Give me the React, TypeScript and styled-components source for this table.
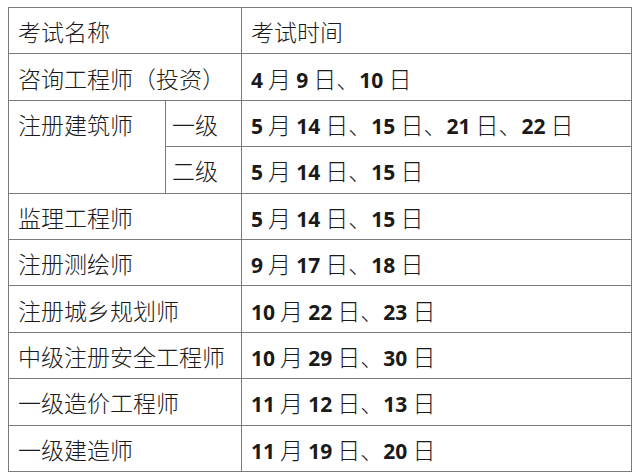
import React from "react";
import styled, { createGlobalStyle } from "styled-components";

const Global = createGlobalStyle`
  html, body { margin: 0; padding: 0; background: #fff; }
  body { font-family: "Noto Sans CJK SC", sans-serif; }
`;

const Page = styled.div`
  width: 640px;
  height: 476px;
  padding: 7px 0 0 8px;
  box-sizing: border-box;
`;

const Grid = styled.div`
  display: grid;
  grid-template-columns: 157px 76px 390px;
  grid-auto-rows: 46.4px;
  border-left: 1.5px solid #7a7a7a;
  border-top: 1.5px solid #7a7a7a;
  width: fit-content;
`;

const Cell = styled.div<{ $span?: number; $rows?: number; $top?: boolean; $pad?: number }>`
  grid-column: span ${(p) => p.$span ?? 1};
  grid-row: span ${(p) => p.$rows ?? 1};
  border-right: 1.5px solid #7a7a7a;
  border-bottom: 1.5px solid #7a7a7a;
  display: flex;
  align-items: ${(p) => (p.$top ? "flex-start" : "center")};
  padding: 1px 0 0 ${(p) => p.$pad ?? 9}px;
  line-height: ${(p) => (p.$top ? "44.4px" : "normal")};
  font-size: 23px;
  font-weight: 300;
  color: #1a1a1a;
  white-space: pre;
  overflow: hidden;
`;

const Num = styled.span`
  font-family: "Open Sans", sans-serif;
  font-weight: 700;
  font-size: 21px;
`;

const split = (s: string) => s.split(/(\d+)/).filter((x) => x !== "");

const DateText = ({ text }: { text: string }) => (
  <span>
    {split(text).map((p, i) =>
      /\d/.test(p) ? <Num key={i}>{p}</Num> : <React.Fragment key={i}>{p}</React.Fragment>
    )}
  </span>
);

const rows: [string, string][] = [
  ["监理工程师", "5 月 14 日、15 日"],
  ["注册测绘师", "9 月 17 日、18 日"],
  ["注册城乡规划师", "10 月 22 日、23 日"],
  ["中级注册安全工程师", "10 月 29 日、30 日"],
  ["一级造价工程师", "11 月 12 日、13 日"],
  ["一级建造师", "11 月 19 日、20 日"],
];

export default function App() {
  return (
    <>
      <Global />
      <Page>
        <Grid>
          <Cell $span={2}>考试名称</Cell>
          <Cell>考试时间</Cell>
          <Cell $span={2}>咨询工程师（投资）</Cell>
          <Cell>
            <DateText text="4 月 9 日、10 日" />
          </Cell>
          <Cell $rows={2} $top>
            注册建筑师
          </Cell>
          <Cell $pad={6}>一级</Cell>
          <Cell>
            <DateText text="5 月 14 日、15 日、21 日、22 日" />
          </Cell>
          <Cell $pad={6}>二级</Cell>
          <Cell>
            <DateText text="5 月 14 日、15 日" />
          </Cell>
          {rows.map(([n, d]) => (
            <React.Fragment key={n}>
              <Cell $span={2}>{n}</Cell>
              <Cell>
                <DateText text={d} />
              </Cell>
            </React.Fragment>
          ))}
        </Grid>
      </Page>
    </>
  );
}
